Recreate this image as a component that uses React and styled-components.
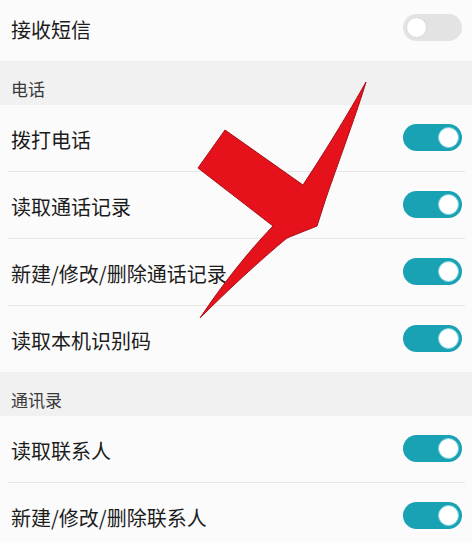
import React from 'react'
import styled, { createGlobalStyle } from 'styled-components'

const GlobalStyle = createGlobalStyle`
  html, body {
    margin: 0;
    padding: 0;
    background: #fbfbfb;
  }
  body {
    font-family: "Noto Sans CJK SC", "Noto Sans", sans-serif;
  }
`

const sections = [
  {
    title: null,
    items: [{ label: '接收短信', on: false }],
  },
  {
    title: '电话',
    items: [
      { label: '拨打电话', on: true },
      { label: '读取通话记录', on: true },
      { label: '新建/修改/删除通话记录', on: true },
      { label: '读取本机识别码', on: true },
    ],
  },
  {
    title: '通讯录',
    items: [
      { label: '读取联系人', on: true },
      { label: '新建/修改/删除联系人', on: true },
    ],
  },
]

const Page = styled.div`
  position: relative;
  width: 472px;
  height: 542px;
  overflow: hidden;
  background: #fbfbfb;
`

const List = styled.div`
  margin-top: -5px;
`

const SectionHeader = styled.div`
  height: 44px;
  box-sizing: border-box;
  display: flex;
  align-items: center;
  padding: 10px 11px 0;
  background: #f1f1f1;
  color: #3a3a3a;
  font-size: 17px;
`

const Row = styled.div`
  height: 66px;
  margin: 0 7px 0 8px;
  padding: 0 3px;
  display: flex;
  align-items: center;
  justify-content: space-between;

  & + & {
    border-top: 1px solid #e7e7e7;
  }
`

const Label = styled.span`
  font-size: 20px;
  color: #1c1c1c;
  padding-top: 3px;
`

const Track = styled.div`
  width: 59px;
  height: 27px;
  border-radius: 14px;
  box-sizing: border-box;
  display: flex;
  align-items: center;
  padding: 0 3px;
  justify-content: ${(p) => (p.$on ? 'flex-end' : 'flex-start')};
  background: ${(p) => (p.$on ? '#19a1b4' : '#e3e3e3')};
  margin-top: -2px;
`

const Knob = styled.div`
  width: 21px;
  height: 21px;
  border-radius: 50%;
  background: #fff;
  box-sizing: border-box;
  border: 1px solid ${(p) => (p.$on ? '#7fd6e0' : '#d9d9d9')};
`

const Overlay = styled.svg`
  position: absolute;
  left: 0;
  top: 0;
  pointer-events: none;
`

const Toggle = ({ on }) => (
  <Track $on={on}>
    <Knob $on={on} />
  </Track>
)

// big red check mark drawn over the list
const CheckMark = () => (
  <Overlay width="472" height="542" viewBox="0 0 472 542">
    <path
      d="M198 168 L225 130 L303 185 C318 162 340 128 366 82 C357 112 342 152 326 198 L317 226 L287 238 C258 262 228 290 200 318 C222 285 248 252 273 226 Z"
      fill="#e5111b"
      stroke="#a8101a"
      strokeWidth="1"
      strokeLinejoin="miter"
    />
  </Overlay>
)

export default function App() {
  return (
    <>
      <GlobalStyle />
      <Page>
        <List>
          {sections.map((s, i) => (
            <React.Fragment key={i}>
              {s.title && <SectionHeader>{s.title}</SectionHeader>}
              <div>
                {s.items.map((it) => (
                  <Row key={it.label}>
                    <Label>{it.label}</Label>
                    <Toggle on={it.on} />
                  </Row>
                ))}
              </div>
            </React.Fragment>
          ))}
        </List>
        <CheckMark />
      </Page>
    </>
  )
}
